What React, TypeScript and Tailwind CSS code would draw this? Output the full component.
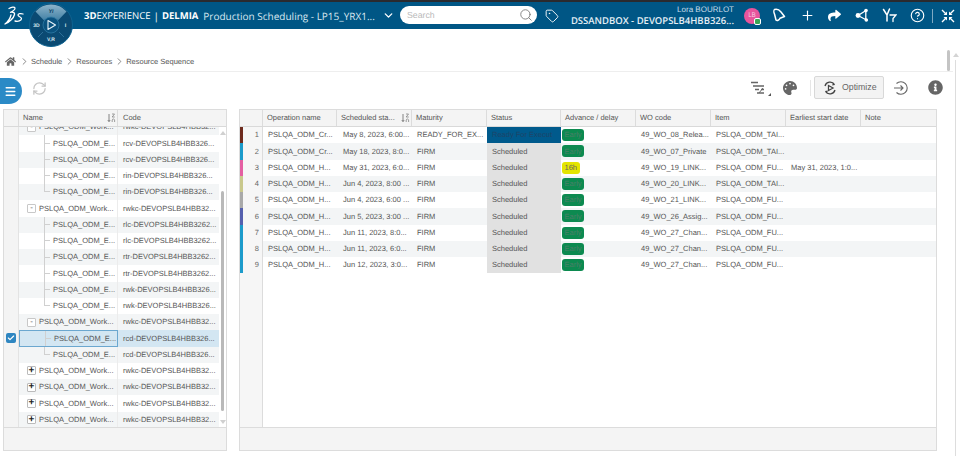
import React from 'react';
import { Search, Tag, Plus, CircleHelp, Check, ChevronRight, ChevronDown, RefreshCw, Menu } from 'lucide-react';
import { FaPalette, FaInfoCircle, FaHome, FaShare } from 'react-icons/fa';

const SortIcon = () => (
  <svg width="9" height="10" viewBox="0 0 9 10" className="text-[#777]">
    <path d="M2 1v7.5M.8 7l1.2 1.6L3.2 7" stroke="currentColor" fill="none" strokeWidth="0.9" />
    <path d="M5 1h2.5L5.2 4h2.6M5.2 9V7l1.2-1.3L7.6 7v2" stroke="currentColor" fill="none" strokeWidth="0.7" />
  </svg>
);

const Compass = () => (
  <svg width="44" height="44" viewBox="0 0 44 44">
    <defs>
      <linearGradient id="top" x1="0" y1="0" x2="0" y2="1">
        <stop offset="0" stopColor="#8db4ca" />
        <stop offset="1" stopColor="#3f7fa4" />
      </linearGradient>
    </defs>
    <circle cx="22" cy="22" r="21.5" fill="#0a4a73" />
    <circle cx="22" cy="22" r="21.5" fill="none" stroke="#0d6391" strokeWidth="1" />
    <path d="M6.5 8.5A20.5 20.5 0 0 1 37.5 8.5L28.5 18A9 9 0 0 0 15.5 18Z" fill="url(#top)" />
    <path d="M9 34l5-5M35 34l-5-5" stroke="#3a7ea6" strokeWidth="0.7" />
    <circle cx="22" cy="22" r="8" fill="#0a527f" stroke="#2f7ba6" strokeWidth="0.8" />
    <path d="M19 17.5v9l7.5-4.5z" fill="none" stroke="#e8f3f9" strokeWidth="1.1" strokeLinejoin="round" />
    <text x="22" y="10" textAnchor="middle" fontSize="5.5" fontStyle="italic" fontWeight="700" fill="#0a3f63" fontFamily="Liberation Sans, sans-serif">Yi</text>
    <text x="7.5" y="24" textAnchor="middle" fontSize="5" fontWeight="700" fill="#d9e8f1" fontFamily="Liberation Sans, sans-serif">3D</text>
    <text x="36.5" y="24" textAnchor="middle" fontSize="5.5" fontWeight="700" fill="#d9e8f1" fontFamily="Liberation Sans, sans-serif">i</text>
    <text x="22" y="38" textAnchor="middle" fontSize="5" fontWeight="700" fill="#d9e8f1" fontFamily="Liberation Sans, sans-serif">V,R</text>
  </svg>
);

const DsLogo = () => (
  <svg width="20" height="20" viewBox="0 0 20 20" fill="none" stroke="#fff" strokeLinecap="round" strokeLinejoin="round">
    <path d="M5 2.500c2.500-1.500 5.500-1.800 6-.5.4 1.400-2.500 3.500-4.500 4.300 3-.4 4.500.4 4 2.200C9.800 12 5 16.500 1 18c2-1.500 5-4.500 6-9" strokeWidth="1.300" />
    <path d="M19 8c-2-.8-5-.5-5 1.100 0 1.700 3.500 1.600 3.500 3.500 0 2.200-3.500 3.200-6.500 2.400" strokeWidth="1.300" />
  </svg>
);

const BellIcon = () => (
  <svg width="15" height="15" viewBox="0 0 15 15" fill="none" stroke="#fff" strokeWidth="1.500" strokeLinejoin="round">
    <path d="M2.500 1.500c2-.6 5 .6 6.500 2.500l3.500 4.500-4.500 1.800c-.8 2-3 2.700-4 1.700L2.500 6c-.8-1.500-.8-3.800 0-4.500z" />
  </svg>
);

const ShareNodes = () => (
  <svg width="15" height="15" viewBox="0 0 15 15" fill="#fff" stroke="#fff">
    <path d="M3 7.500L11 2.500M3 7.500L11.500 12M10.800 2.500v9.500" strokeWidth="1.300" fill="none" />
    <circle cx="3" cy="7.500" r="2.400" stroke="none" />
    <circle cx="11" cy="2.500" r="1.800" stroke="none" />
    <circle cx="11.300" cy="12" r="1.800" stroke="none" />
  </svg>
);

const CollabIcon = () => (
  <svg width="15" height="15" viewBox="0 0 15 15" fill="none" stroke="#fff" strokeWidth="1.500" strokeLinecap="round">
    <path d="M1.500 1.500L5 7v6M7.500 1L5 7" />
    <path d="M8 7h6l-3 3.500v3" strokeWidth="1.300" />
  </svg>
);

const ExpandIcon = () => (
  <svg width="14" height="14" viewBox="0 0 14 14" fill="#fff">
    <path d="M1 1l4.500 4.500M13 1L8.500 5.500M1 13l4.500-4.500M13 13L8.500 8.500" stroke="#fff" strokeWidth="1.400" />
    <path d="M6 2.500V6H2.500zM8 2.500V6h3.500zM6 11.500V8H2.500zM8 11.500V8h3.500z" />
  </svg>
);

const GanttIcon = () => (
  <svg width="16" height="14" viewBox="0 0 16 14" fill="none" stroke="#666" strokeWidth="1.600">
    <path d="M1 1.500h7M3 5h11M5 8.500h4M11 8.500h3M7 12h7" />
    <path d="M9 12l4-5" strokeWidth="1" />
  </svg>
);

const OptimizeIcon = () => (
  <svg width="14" height="14" viewBox="0 0 14 14" fill="none" stroke="#444" strokeWidth="1.300">
    <path d="M2 5a5.300 5.300 0 0 1 9.500-1.500M12 9a5.300 5.300 0 0 1-9.500 1.500" />
    <path d="M10 1.500l2 2.500-2.800.5zM4 12.500L2 10l2.800-.5z" fill="#444" stroke="none" />
    <path d="M5.500 4.500v5L10 7z" fill="#fff" />
  </svg>
);

const EnterIcon = () => (
  <svg width="16" height="16" viewBox="0 0 16 16" fill="none" stroke="#666" strokeWidth="1.100">
    <path d="M3.500 3.500a6.300 6.300 0 1 1 0 9M1 8h9M7.500 5.500L10 8l-2.500 2.500" />
  </svg>
);

type TreeRow = { kind: 'open' | 'closed' | 'child' | 'last'; code: string; selected?: boolean };

const treeRows: TreeRow[] = [
  { kind: 'open', code: 'rwkc-DEVOPSLB4HBB32...' },
  { kind: 'child', code: 'rcv-DEVOPSLB4HBB326...' },
  { kind: 'child', code: 'rcv-DEVOPSLB4HBB326...' },
  { kind: 'child', code: 'rin-DEVOPSLB4HBB326...' },
  { kind: 'last', code: 'rin-DEVOPSLB4HBB326...' },
  { kind: 'open', code: 'rwkc-DEVOPSLB4HBB32...' },
  { kind: 'child', code: 'rlc-DEVOPSLB4HBB3262...' },
  { kind: 'child', code: 'rlc-DEVOPSLB4HBB3262...' },
  { kind: 'child', code: 'rtr-DEVOPSLB4HBB3262...' },
  { kind: 'child', code: 'rtr-DEVOPSLB4HBB3262...' },
  { kind: 'child', code: 'rwk-DEVOPSLB4HBB326...' },
  { kind: 'last', code: 'rwk-DEVOPSLB4HBB326...' },
  { kind: 'open', code: 'rwkc-DEVOPSLB4HBB32...' },
  { kind: 'child', code: 'rcd-DEVOPSLB4HBB326...', selected: true },
  { kind: 'last', code: 'rcd-DEVOPSLB4HBB326...' },
  { kind: 'closed', code: 'rwkc-DEVOPSLB4HBB32...' },
  { kind: 'closed', code: 'rwkc-DEVOPSLB4HBB32...' },
  { kind: 'closed', code: 'rwkc-DEVOPSLB4HBB32...' },
  { kind: 'closed', code: 'rwkc-DEVOPSLB4HBB32...' },
];

const operations = [
  { bar: 'bg-[#6e2b1d]', name: 'PSLQA_ODM_Cr...', start: 'May 8, 2023, 6:00...', maturity: 'READY_FOR_EX...', status: 'Ready For Execut', delay: 'Early', wo: '49_WO_08_Relea...', item: 'PSLQA_ODM_TAI...', earliest: '' },
  { bar: 'bg-[#1c9bcb]', name: 'PSLQA_ODM_Cr...', start: 'May 18, 2023, 8:0...', maturity: 'FIRM', status: 'Scheduled', delay: 'Early', wo: '49_WO_07_Private', item: 'PSLQA_ODM_TAI...', earliest: '' },
  { bar: 'bg-[#e45fa2]', name: 'PSLQA_ODM_H...', start: 'May 31, 2023, 6:0...', maturity: 'FIRM', status: 'Scheduled', delay: '16h', wo: '49_WO_19_LINK...', item: 'PSLQA_ODM_FU...', earliest: 'May 31, 2023, 1:0...' },
  { bar: 'bg-[#c9c88c]', name: 'PSLQA_ODM_H...', start: 'Jun 4, 2023, 8:00 ...', maturity: 'FIRM', status: 'Scheduled', delay: 'Early', wo: '49_WO_20_LINK...', item: 'PSLQA_ODM_TAI...', earliest: '' },
  { bar: 'bg-[#a9a9a9]', name: 'PSLQA_ODM_H...', start: 'Jun 4, 2023, 6:00 ...', maturity: 'FIRM', status: 'Scheduled', delay: 'Early', wo: '49_WO_21_LINK...', item: 'PSLQA_ODM_FU...', earliest: '' },
  { bar: 'bg-[#5560ae]', name: 'PSLQA_ODM_H...', start: 'Jun 5, 2023, 3:00 ...', maturity: 'FIRM', status: 'Scheduled', delay: 'Early', wo: '49_WO_26_Assig...', item: 'PSLQA_ODM_FU...', earliest: '' },
  { bar: 'bg-[#1c9bcb]', name: 'PSLQA_ODM_H...', start: 'Jun 11, 2023, 8:0...', maturity: 'FIRM', status: 'Scheduled', delay: 'Early', wo: '49_WO_27_Chan...', item: 'PSLQA_ODM_FU...', earliest: '' },
  { bar: 'bg-[#1c9bcb]', name: 'PSLQA_ODM_H...', start: 'Jun 11, 2023, 6:0...', maturity: 'FIRM', status: 'Scheduled', delay: 'Early', wo: '49_WO_27_Chan...', item: 'PSLQA_ODM_FU...', earliest: '' },
  { bar: 'bg-[#1c9bcb]', name: 'PSLQA_ODM_H...', start: 'Jun 12, 2023, 3:0...', maturity: 'FIRM', status: 'Scheduled', delay: 'Early', wo: '49_WO_27_Chan...', item: 'PSLQA_ODM_FU...', earliest: '' },
];

const columns = ['Operation name', 'Scheduled sta...', 'Maturity', 'Status', 'Advance / delay', 'WO code', 'Item', 'Earliest start date', 'Note'];

const Crumb = ({ label }: { label: string }) => (
  <>
    <ChevronRight size={11} strokeWidth={1.5} className="text-[#555] mx-[1.500px]" />
    <span>{label}</span>
  </>
);

const TreePanel = () => (
  <div className="w-[224px] flex flex-col border border-[#dcdcdc] bg-[#f4f4f4] shrink-0">
    <div className="h-[17px] flex shrink-0 border-b border-[#d9d9d9]">
      <div className="w-[15px] border-r border-[#dcdcdc]" />
      <div className="w-[99px] flex items-center justify-between pl-[4px] pr-[1px] border-r border-[#dcdcdc]">
        <span>Name</span>
        <SortIcon />
      </div>
      <div className="pl-[5px] flex items-center">Code</div>
    </div>
    <div className="flex-1 flex overflow-hidden min-h-0">
      <div className="w-[15px] shrink-0 -mt-[8px] border-r border-[#e3e3e3]">
        {treeRows.map((row, i) => (
          <div key={i} className="h-[16.25px] flex items-center justify-center">
            {row.selected && (
              <span className="w-[10px] h-[10px] rounded-[2px] bg-[#2f86c1] flex items-center justify-center">
                <Check size={8} strokeWidth={3.5} className="text-white" />
              </span>
            )}
          </div>
        ))}
      </div>
      <div className="w-[200px] shrink-0 -mt-[8px] bg-white">
        {treeRows.map((row, i) => (
          <div
            key={i}
            className={`h-[16.25px] flex items-center ${row.selected ? 'bg-[#d3e6f2]' : i % 2 === 0 ? 'bg-[#f3f5f6]' : 'bg-white'}`}
          >
            <div className={`w-[99px] h-full shrink-0 flex items-center border-r ${row.selected ? 'border border-[#6ba7cf]' : 'border-[#ececec]'}`}>
              {row.kind === 'open' || row.kind === 'closed' ? (
                <>
                  <span className={`ml-[8px] w-[9px] h-[9px] shrink-0 border rounded-[1px] bg-white flex items-center justify-center leading-none ${row.kind === 'open' ? 'border-[#c8c8c8] text-[8px] text-[#555]' : 'border-[#bbbbbb] text-[10px] font-bold text-[#222]'}`}>
                    {row.kind === 'open' ? '-' : '+'}
                  </span>
                  <span className="ml-[3px] whitespace-nowrap">PSLQA_ODM_Work...</span>
                </>
              ) : (
                <>
                  <span className={`ml-[25px] w-[6px] shrink-0 border-l border-[#d0d0d0] ${row.kind === 'last' ? 'h-[8px] -mt-[8px] border-b' : 'h-full flex items-center'}`}>
                    {row.kind === 'child' && <span className="w-full border-t border-[#d0d0d0]" />}
                  </span>
                  <span className="ml-[3px] whitespace-nowrap">PSLQA_ODM_E...</span>
                </>
              )}
            </div>
            <span className="pl-[5px] whitespace-nowrap">{row.code}</span>
          </div>
        ))}
      </div>
      <div className="flex-1 bg-white flex flex-col items-center pt-[4px] pb-[3px]">
        <span className="w-0 h-0 border-x-[3px] border-x-transparent border-b-[4px] border-b-[#d0d0d0]" />
        <span className="w-[3px] bg-[#b9b9b9] rounded-full mt-[56px] h-[220px]" />
        <span className="mt-auto w-0 h-0 border-x-[3px] border-x-transparent border-t-[4px] border-t-[#d0d0d0]" />
      </div>
    </div>
    <div className="h-[23px] shrink-0 border-t border-[#dcdcdc] bg-[#f4f4f4]" />
  </div>
);

const OperationsPanel = () => (
  <div className="w-[698px] flex flex-col border border-[#dcdcdc] bg-white shrink-0">
    <div className="h-[17px] flex shrink-0 border-b border-[#d9d9d9] bg-[#f4f4f4]">
      <div className="w-[23px] border-r border-[#dcdcdc] shrink-0" />
      <div className="flex-1 grid grid-cols-[74px_75px_75px_74px_75px_75px_75px_75px_1fr]">
        {columns.map((c) => (
          <div key={c} className="flex items-center justify-between pl-[4px] pr-[1px] border-r border-[#dcdcdc] last:border-r-0 whitespace-nowrap">
            <span>{c}</span>
            {c === 'Scheduled sta...' && <SortIcon />}
          </div>
        ))}
      </div>
    </div>
    <div className="flex-1 flex min-h-0">
      <div className="w-[23px] shrink-0 bg-[#f6f6f6] border-r border-[#dcdcdc]">
        {operations.map((op, i) => (
          <div key={i} className="h-[16.25px] flex items-center justify-between pr-[3px] text-[#666]">
            <span className={`w-[3px] h-full ${op.bar}`} />
            <span>{i + 1}</span>
          </div>
        ))}
      </div>
      <div className="flex-1">
        {operations.map((op, i) => (
          <div
            key={i}
            className={`h-[16.25px] grid grid-cols-[74px_75px_75px_74px_75px_75px_75px_75px_1fr] items-center ${i % 2 === 0 ? 'bg-white' : 'bg-[#f3f5f6]'}`}
          >
            <span className="pl-[5px] whitespace-nowrap">{op.name}</span>
            <span className="pl-[6px] whitespace-nowrap">{op.start}</span>
            <span className="pl-[5px] whitespace-nowrap">{op.maturity}</span>
            <span className={`h-full flex items-center pl-[5px] whitespace-nowrap overflow-hidden ${i === 0 ? 'bg-[#005a8c] text-[#1d4468]' : 'bg-[#e1e1e1]'}`}>
              {op.status}
            </span>
            <span className="pl-[1px] flex items-center">
              <span className={`inline-flex items-center h-[12px] px-[2.500px] rounded-[3px] ${op.delay === '16h' ? 'bg-[#e4e400] text-[#666]' : 'bg-[#0c8a50] text-[#4a8068]'}`}>
                {op.delay}
              </span>
            </span>
            <span className="pl-[5px] whitespace-nowrap">{op.wo}</span>
            <span className="pl-[5px] whitespace-nowrap">{op.item}</span>
            <span className="pl-[5px] whitespace-nowrap">{op.earliest}</span>
            <span />
          </div>
        ))}
      </div>
    </div>
    <div className="h-[23px] shrink-0 border-t border-[#dcdcdc] bg-[#f4f4f4]" />
  </div>
);

export default function App() {
  return (
    <div className="relative w-[960px] h-[456px] overflow-hidden bg-white flex flex-col font-['Liberation_Sans',Arial,sans-serif] [text-rendering:geometricPrecision] text-[7.500px] leading-none text-[#555]">
      {/* Top bar */}
      <header className="h-[29px] shrink-0 bg-[#005685] border-t-2 border-[#2a2a2e] flex items-center text-white font-['Open_Sans',sans-serif]">
        <div className="w-[84px] pl-[4px] shrink-0"><DsLogo /></div>
        <div className="w-[316px] shrink-0 flex items-center whitespace-nowrap">
          <span className="text-[9.500px] font-bold">3D</span>
          <span className="text-[9.500px]">EXPERIENCE</span>
          <span className="text-[10px] mx-[3px]">|</span>
          <span className="text-[9.500px] font-bold">DELMIA</span>
          <span className="text-[10px] ml-[5px] text-[#dbe9f1]">Production Scheduling - LP15_YRX1...</span>
          <ChevronDown size={13} strokeWidth={2.5} className="ml-[7px]" />
        </div>
        <div className="w-[137px] h-[18px] shrink-0 rounded-full bg-white flex items-center justify-between pl-[7px] pr-[4px] -mt-[1px]">
          <span className="text-[8.750px] text-[#b9b9b9] font-['Liberation_Sans',sans-serif]">Search</span>
          <Search size={14} strokeWidth={1.5} className="text-[#777]" />
        </div>
        <Tag size={14} strokeWidth={1.6} className="ml-[8px] shrink-0" />
        <div className="w-[168px] ml-[7px] shrink-0 flex flex-col items-end gap-[2px] whitespace-nowrap">
          <span className="text-[8px] text-[#c9dde9] font-['Liberation_Sans',sans-serif]">Lora BOURLOT</span>
          <span className="text-[9.500px] font-semibold text-[#e6f0f6]">DSSANDBOX - DEVOPSLB4HBB326...</span>
        </div>
        <div className="relative ml-[10px] w-[16px] h-[16px] shrink-0 rounded-full bg-[#e8559c] flex items-center justify-center text-[6.500px] text-[#f7d4e6]">
          LB
          <span className="absolute -right-[1px] -bottom-[1px] w-[7px] h-[7px] rounded-[2px] bg-[#3aa655] border border-white" />
        </div>
        <div className="ml-[12px] flex items-center gap-[12.500px] shrink-0">
          <BellIcon />
          <Plus size={15} strokeWidth={1.8} />
          <FaShare size={13} className="mx-[1px]" />
          <ShareNodes />
          <CollabIcon />
          <CircleHelp size={15} strokeWidth={1.8} />
        </div>
        <span className="ml-[7px] w-px h-[14px] bg-[#7fa9c2] shrink-0" />
        <div className="ml-[8px] shrink-0"><ExpandIcon /></div>
      </header>

      {/* Compass hangs over the top bar */}
      <div className="absolute left-[29px] top-[3px]"><Compass /></div>

      {/* Breadcrumb */}
      <div className="h-[43px] shrink-0 mr-[7px] border-b border-[#eeeeee] flex items-center pt-[23px] pl-[5px]">
        <FaHome size={11} className="text-[#666] mr-[1px]" />
        <Crumb label="Schedule" />
        <Crumb label="Resources" />
        <Crumb label="Resource Sequence" />
      </div>

      {/* Toolbar */}
      <div className="h-[37px] shrink-0 flex items-start mr-[7px]">
        <div className="w-[22px] h-[26px] mt-[6px] rounded-r-full bg-[#2b8ac6] flex items-center justify-center pr-[2px] shrink-0">
          <Menu size={13} strokeWidth={2.5} className="text-white" />
        </div>
        <RefreshCw size={15} strokeWidth={2} className="ml-[10px] mt-[9px] text-[#c4c4c4]" />
        <div className="ml-auto flex items-center h-[23px] mt-[4px] pr-[10px]">
          <GanttIcon />
          <span className="w-0 h-0 mt-[14px] ml-[2px] border-l-[3px] border-l-transparent border-b-[3px] border-b-[#555]" />
          <FaPalette size={14} className="ml-[12px] text-[#666]" />
          <span className="ml-[13px] w-px h-[16px] bg-[#e6e6e6]" />
          <button className="ml-[3px] w-[70px] h-[23px] bg-[#f3f3f3] border border-[#d8d8d8] rounded-[2px] flex items-center pl-[8px] gap-[5px] text-[8.750px] text-[#666]">
            <OptimizeIcon />
            <span>Optimize</span>
          </button>
          <div className="ml-[9px]"><EnterIcon /></div>
          <FaInfoCircle size={15} className="ml-[19px] text-[#666]" />
        </div>
      </div>

      {/* Panels */}
      <div className="h-[342px] shrink-0 flex gap-[12px] pl-[3px]">
        <TreePanel />
        <OperationsPanel />
      </div>

      {/* Page scrollbars, over the content */}
      <span className="absolute left-[947px] top-[50px] w-[3px] h-[21px] rounded-full bg-[#c4c4c4]" />
      <span className="absolute left-[953px] top-[53px] w-0 h-0 border-x-[3px] border-x-transparent border-b-[4px] border-b-[#d4d4d4]" />
      <span className="absolute left-[955px] top-[60px] w-[1px] h-[396px] bg-[#dddddd]" />
    </div>
  );
}
